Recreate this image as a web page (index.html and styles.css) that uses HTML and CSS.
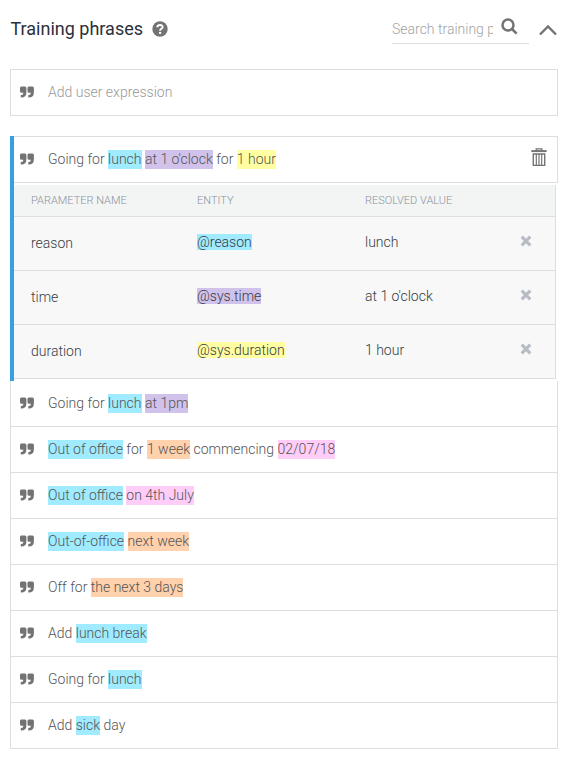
FILE: index.html
```html
<!DOCTYPE html>
<html lang="en">
<head>
<meta charset="utf-8">
<title>Training phrases</title>
<link rel="stylesheet" href="styles.css">
</head>
<body>
<svg class="defs" aria-hidden="true">
  <symbol id="quote" viewBox="0 0 14 12"><path d="M1.2 0.5H4.9Q6.4 .5 6.4 2V6.3Q6.4 11.5 1.3 11.5H.8V9.1H1.3Q3.4 9.1 3.4 6.8H1.6Q0 6.8 0 5.2V2Q0 .5 1.2 .5ZM8.7 .5H12.4Q13.9 .5 13.9 2V6.3Q13.9 11.5 8.8 11.5H8.3V9.1H8.8Q10.9 9.1 10.9 6.8H9.1Q7.5 6.8 7.5 5.2V2Q7.5 .5 8.7 .5Z"/></symbol>
  <symbol id="remove" viewBox="0 0 12 12"><path d="M1.7 1.7L10.3 10.3M10.3 1.7L1.7 10.3" fill="none" stroke="currentColor" stroke-width="3.2"/></symbol>
</svg>
<header class="header">
  <h1 class="title">Training phrases</h1>
  <svg class="help" viewBox="0 0 16 16"><circle cx="8" cy="8" r="7.7"/><path d="M5.3 6.2C5.5 3.2 10.7 3.2 10.6 6.1C10.5 7.9 8.1 7.7 8.1 9.7" fill="none" stroke="#fff" stroke-width="2"/><path d="M7 10.9h2.2v2H7z" fill="#fff"/></svg>
  <div class="search">
    <span class="search-text">Search training phrases</span>
    <svg class="search-icon" viewBox="0 0 17 17"><circle cx="7" cy="7" r="5.5"/><path d="M11 11L15.6 15.6"/></svg>
  </div>
  <svg class="chevron" viewBox="0 0 18 12"><path d="M1 10.5L9 2.5L17 10.5"/></svg>
</header>
<div class="row add"><svg class="quote"><use href="#quote"/></svg><p class="text">Add user expression</p></div>
<section class="active">
  <div class="row selected">
    <svg class="quote"><use href="#quote"/></svg>
    <p class="text">Going for <mark class="blue">lunch</mark> <mark class="purple">at 1 o'clock</mark> for <mark class="yellow">1 hour</mark></p>
    <svg class="trash" viewBox="0 0 16 19"><path d="M5.2 2.7V.8H10.8V2.7" stroke-width="1.3"/><path d="M.3 3.1H15.7" stroke-width="2"/><path d="M2.3 5.5V17.4H13.7V5.5M1.6 6H14.4" stroke-width="1.4"/><path d="M5.3 6V17M8 6V17M10.7 6V17" stroke-width="1.2"/></svg>
  </div>
  <div class="params">
    <div class="param head"><span>PARAMETER NAME</span><span>ENTITY</span><span>RESOLVED VALUE</span></div>
    <div class="param"><span class="name">reason</span><span><mark class="blue">@reason</mark></span><span>lunch</span><svg class="remove"><use href="#remove"/></svg></div>
    <div class="param"><span class="name">time</span><span><mark class="purple">@sys.time</mark></span><span>at 1 o'clock</span><svg class="remove"><use href="#remove"/></svg></div>
    <div class="param"><span class="name">duration</span><span><mark class="yellow">@sys.duration</mark></span><span>1 hour</span><svg class="remove"><use href="#remove"/></svg></div>
  </div>
</section>
<main class="list">
  <div class="row"><svg class="quote"><use href="#quote"/></svg><p class="text">Going for <mark class="blue">lunch</mark> <mark class="purple">at 1pm</mark></p></div>
  <div class="row"><svg class="quote"><use href="#quote"/></svg><p class="text"><mark class="blue">Out of office</mark> for <mark class="orange">1 week</mark> commencing <mark class="pink">02/07/18</mark></p></div>
  <div class="row"><svg class="quote"><use href="#quote"/></svg><p class="text"><mark class="blue">Out of office</mark> <mark class="pink">on 4th July</mark></p></div>
  <div class="row"><svg class="quote"><use href="#quote"/></svg><p class="text"><mark class="blue">Out-of-office</mark> <mark class="orange">next week</mark></p></div>
  <div class="row"><svg class="quote"><use href="#quote"/></svg><p class="text">Off for <mark class="orange">the next 3 days</mark></p></div>
  <div class="row"><svg class="quote"><use href="#quote"/></svg><p class="text">Add <mark class="blue">lunch break</mark></p></div>
  <div class="row"><svg class="quote"><use href="#quote"/></svg><p class="text">Going for <mark class="blue">lunch</mark></p></div>
  <div class="row"><svg class="quote"><use href="#quote"/></svg><p class="text">Add <mark class="blue">sick</mark> day</p></div>
</main>
</body>
</html>
```
FILE: styles.css
```css
* { box-sizing: border-box; }
body {
  margin: 0;
  padding: 0 10px;
  background: #fff;
  color: #555;
  font: 300 14px/20px Roboto, sans-serif;
}
svg { display: block; flex: none; fill: #737373; }
.defs { width: 0; height: 0; position: absolute; }
.header { display: flex; height: 69px; align-items: flex-start; }
.title { margin: 18px 0 0; width: 142px; padding-left: 0.5px; font-size: 18px; line-height: 22px; font-weight: 400; color: #2b303b; white-space: nowrap; }
.help { width: 16px; height: 16px; margin-top: 21px; }
.search { display: flex; width: 137px; height: 44px; margin-left: auto; padding-top: 17px; border-bottom: 1px solid #dedede; }
.search-text { width: 101px; height: 24px; line-height: 24px; overflow: hidden; white-space: nowrap; color: #a3a3a3; }
.search-icon { width: 17px; height: 17px; margin: 1px 0 0 8px; fill: none; stroke: #737373; stroke-width: 2.5; }
.chevron { width: 18px; height: 12px; margin: 24px 1px 0 10px; fill: none; stroke: #737373; stroke-width: 2.4; }
.row { display: flex; height: 46px; align-items: center; padding: 0 0 2px 10px; border-bottom: 1px solid #dedede; }
.quote { width: 14px; height: 12px; margin-right: 14px; }
.text { margin: 0; white-space: pre; }
.row mark { padding: 1px 0 2px; }
mark { color: inherit; }
.blue { background: #a0ebff; }
.purple { background: #d1c2eb; }
.yellow { background: #ffffa1; }
.orange { background: #ffd1ad; }
.pink { background: #ffcdf7; }
.add { height: 47px; padding-left: 9px; border: 1px solid #dedede; color: #999; }
.active { margin-top: 20px; height: 245px; border-left: 4px solid #36a0e0; }
.selected { height: 47px; padding: 0 10px 2px 6px; border: 1px solid #dedede; border-left: 0; }
.trash { width: 16px; height: 19px; margin: -2px 0 0 auto; fill: none; stroke: #737373; }
.params { margin: 2px 2px 0 0; border-right: 1px solid #dedede; color: #373b45; }
.param { display: grid; grid-template-columns: 166px 168px 155px 12px; align-items: center; height: 54px; padding: 0 0 3px 17px; background: #f8f8f8; border-bottom: 1px solid #dedede; }
.head { height: 32px; padding-bottom: 0; background: #f3f5f5; color: #8b929b; font-size: 11px; }
.name { padding-top: 2px; }
.remove { width: 12px; height: 12px; margin: -2px 0 0 -0.5px; color: #b8bcc4; }
.list { border: 1px solid #dedede; border-width: 0 1px; }
.list .row { padding-left: 9px; }
```
